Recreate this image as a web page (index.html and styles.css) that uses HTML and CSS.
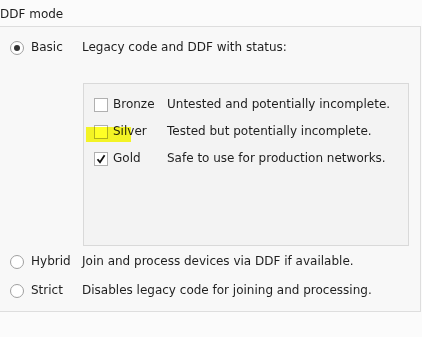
FILE: index.html
```html
<!DOCTYPE html>
<html lang="en">
<head>
    <meta charset="UTF-8">
    <meta name="viewport" content="width=device-width, initial-scale=1.0">
    <title>DDF mode</title>
    <link rel="stylesheet" href="styles.css">
</head>
<body>
    <div class="title">DDF mode</div>
    <div class="group">
        <div class="row top">
            <span class="radio checked"></span>
            <span class="label">Basic</span>
            <div class="desc">
                <div class="line">Legacy code and DDF with status:</div>
                <div class="inner">
                    <div class="crow">
                        <span class="check"></span>
                        <span class="clabel">Bronze</span>
                        <span>Untested and potentially incomplete.</span>
                    </div>
                    <div class="crow">
                        <span class="check"></span>
                        <span class="clabel">Silver</span>
                        <span>Tested but potentially incomplete.</span>
                        <span class="marker"></span>
                    </div>
                    <div class="crow">
                        <span class="check">
                            <svg width="12" height="12" viewBox="0 0 12 12"><path d="M2.5 6.2 L5 9.3 L9.6 2.2" fill="none" stroke="#111" stroke-width="1.8"/></svg>
                        </span>
                        <span class="clabel">Gold</span>
                        <span>Safe to use for production networks.</span>
                    </div>
                </div>
            </div>
        </div>
        <div class="row">
            <span class="radio"></span>
            <span class="label">Hybrid</span>
            <div class="desc">Join and process devices via DDF if available.</div>
        </div>
        <div class="row">
            <span class="radio"></span>
            <span class="label">Strict</span>
            <div class="desc">Disables legacy code for joining and processing.</div>
        </div>
    </div>
</body>
</html>
```

FILE: styles.css
```css
body { margin: 0; background: #fbfbfb; font-family: "DejaVu Sans", sans-serif; font-size: 12px; color: #1e1e1e; width: 422px; height: 337px; overflow: hidden; }
.title { height: 26px; line-height: 28px; }
.group { width: 421px; height: 286px; box-sizing: border-box; border: 1px solid #dedede; border-left: none; background: #f8f8f8; padding: 12px 0 0 10px; }
.row { display: grid; grid-template-columns: 14px 44px 1fr; column-gap: 7px; align-items: center; height: 29px; }
.row.top { align-items: start; height: auto; margin-bottom: 1px; }
.row.top .radio { margin-top: 2px; }
.radio { width: 14px; height: 14px; box-sizing: border-box; border: 1px solid #a0a0a0; border-radius: 50%; background: #fff; display: flex; align-items: center; justify-content: center; }
.radio.checked::after { content: ""; width: 6px; height: 6px; border-radius: 50%; background: #333; }
.label { line-height: 17px; }
.desc { line-height: 17px; }
.line { height: 17px; }
.inner { position: relative; margin-top: 27px; width: 326px; height: 163px; box-sizing: border-box; border: 1px solid #d9d9d9; background: #f3f3f3; padding: 7px 0 0 10px; margin-left: 1px; }
.crow { position: relative; display: flex; align-items: center; height: 27px; }
.check { width: 14px; height: 14px; box-sizing: border-box; border: 1px solid #b0b0b0; background: #fff; display: flex; align-items: center; justify-content: center; margin-right: 5px; }
.clabel { width: 54px; }
.marker { position: absolute; left: -8px; top: 9px; width: 45px; height: 15px; background: #ffff00; mix-blend-mode: multiply; opacity: 0.85; }
```
